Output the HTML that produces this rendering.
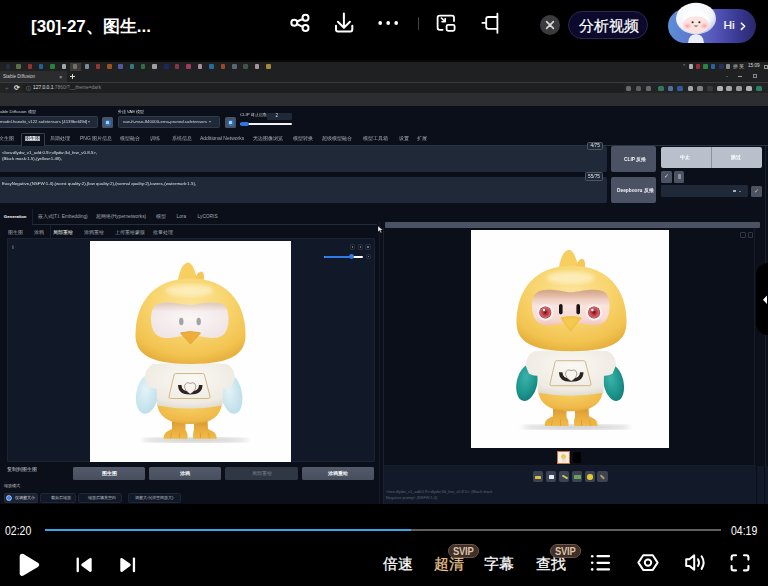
<!DOCTYPE html>
<html><head><meta charset="utf-8">
<style>
*{margin:0;padding:0;box-sizing:border-box}
html,body{width:768px;height:586px;overflow:hidden;background:#000}
body{position:relative;font-family:"Liberation Sans",sans-serif;color:#fff}
.a{position:absolute}
.t{position:absolute;white-space:nowrap;line-height:1}
</style></head><body>

<!-- ===== TOP BAR ===== -->
<div class="t" style="left:31px;top:17.6px;font-size:17px;font-weight:bold;color:#fff">[30]-27、图生...</div>
<svg class="a" style="left:0;top:0" width="768" height="50" viewBox="0 0 768 50" fill="none" stroke="#fff" stroke-width="2" stroke-linecap="round" stroke-linejoin="round">
  <!-- share -->
  <circle cx="305.5" cy="17.8" r="3"/><circle cx="294.3" cy="22.8" r="3"/><circle cx="305.5" cy="28" r="3"/>
  <line x1="297" y1="21.5" x2="302.8" y2="19"/><line x1="297" y1="24.2" x2="302.8" y2="26.8"/>
  <!-- download -->
  <path d="M343.9 13.6V27.6M337.9 21.8L343.9 27.8L349.9 21.8"/>
  <path d="M336 25.8V29.4Q336 31.4 338 31.4H350.3Q352.3 31.4 352.3 29.4V25.8"/>
  <!-- dots -->
  <circle cx="380.2" cy="23" r="1.9" fill="#fff" stroke="none"/><circle cx="388.2" cy="23" r="1.9" fill="#fff" stroke="none"/><circle cx="396.2" cy="23" r="1.9" fill="#fff" stroke="none"/>
  <line x1="418.5" y1="17.5" x2="418.5" y2="29.5" stroke="#444" stroke-width="1"/>
  <!-- pip -->
  <path d="M454 21V17.6Q454 15.6 452 15.6H439.6Q437.6 15.6 437.6 17.6V27.8Q437.6 29.8 439.6 29.8H442.6" stroke-width="1.8"/>
  <rect x="446.6" y="24.8" width="8" height="6" rx="1.5" stroke-width="1.8"/>
  <path d="M441.4 18L445 21.6M445.2 18.6V21.8H442" stroke-width="1.6"/>
  <!-- last -->
  <path d="M497.4 13.6V32.8M497.4 17H488.2Q486.2 17 486.2 19V26.8Q486.2 28.8 488.2 28.8H497.4M486 22.9H482.4" stroke-width="1.8"/>
</svg>
<!-- close x -->
<div class="a" style="left:540px;top:15px;width:20px;height:20px;border-radius:10px;background:#3b3b3f"></div>
<svg class="a" style="left:540px;top:15px" width="20" height="20" stroke="#d8d8d8" stroke-width="1.6" stroke-linecap="round"><path d="M6.6 6.6L13.4 13.4M13.4 6.6L6.6 13.4"/></svg>
<!-- analyse pill -->
<div class="a" style="left:568px;top:10.5px;width:80px;height:28px;border-radius:14px;background:#0b0a2c;border:1px solid #2a2852"></div>
<div class="t" style="left:579px;top:18px;font-size:15px;-webkit-text-stroke:0.2px #fff;color:#fff">分析视频</div>
<!-- hi pill -->
<div class="a" style="left:668px;top:9px;width:88px;height:34px;border-radius:17px;background:linear-gradient(90deg,#5d8fd8 0%,#5d74cc 30%,#5454b8 55%,#3a3a96 78%,#28286a 100%)"></div>
<svg class="a" style="left:668px;top:0" width="60" height="46">
  <defs><radialGradient id="hel" cx="0.42" cy="0.35" r="0.65"><stop offset="0" stop-color="#ffffff"/><stop offset="0.75" stop-color="#f1f4fa"/><stop offset="1" stop-color="#c4d0ea"/></radialGradient>
  <radialGradient id="cheek" cx="0.5" cy="0.5" r="0.5"><stop offset="0" stop-color="#ff95a5"/><stop offset="1" stop-color="#ffc9cf" stop-opacity="0"/></radialGradient></defs>
  <path d="M20 43Q20.5 34.5 28 34Q35.5 34.5 36 43Z" fill="#e9eef8"/>
  <ellipse cx="28" cy="18.5" rx="20" ry="15.8" fill="url(#hel)"/>
  <ellipse cx="28" cy="23.5" rx="13.5" ry="10" fill="#fde3e0"/>
  <path d="M14.5 23Q15 11 28 10.5Q41 11 41.5 23Q37 15.5 28 16.5Q19 15.5 14.5 23Z" fill="#fdfdff"/>
  <ellipse cx="19.5" cy="26" rx="5" ry="3.8" fill="url(#cheek)"/>
  <ellipse cx="36.5" cy="26" rx="5" ry="3.8" fill="url(#cheek)"/>
  <circle cx="24.6" cy="22.2" r="1.05" fill="#222"/><circle cx="31.4" cy="22.2" r="1.05" fill="#222"/>
  <path d="M26.3 25.6Q28 27 29.7 25.6" stroke="#333" stroke-width="0.8" fill="none"/>
</svg>
<div class="t" style="left:723.5px;top:19.8px;font-size:11.8px;-webkit-text-stroke:0.2px #fff;color:#fff">Hi</div>
<svg class="a" style="left:738px;top:20px" width="10" height="12" fill="none" stroke="#fff" stroke-width="1.6" stroke-linecap="round" stroke-linejoin="round"><path d="M3.4 3.2L6.6 6.3L3.4 9.4"/></svg>

<!-- ===== VIDEO FRAME ===== -->
<div class="a" id="vf" style="left:0;top:0;width:768px;height:504px;filter:blur(0.35px)">
<div class="a" style="left:0;top:60px;width:768px;height:444px;background:#0b0f19"></div>
<!-- browser chrome -->
<div class="a" style="left:0;top:60px;width:768px;height:2px;background:#0a0a0a"></div>
<div class="a" style="left:0;top:62px;width:768px;height:20px;background:#1f2021"></div>
<div class="a" style="left:0;top:70.5px;width:67px;height:11.5px;background:#2b2c2e"></div>
<div class="a" style="left:0;top:82px;width:768px;height:1px;background:#3a3b3c"></div>
<div class="a" style="left:0;top:83px;width:768px;height:10px;background:#222324"></div>
<div class="a" style="left:0;top:93px;width:768px;height:13px;background:#2c2d2f"></div>
<!-- chrome content -->
<div class="a" style="left:70px;top:62.5px;width:11px;height:8px;background:#3a3a3a"></div>
<div class="a" style="left:5.5px;top:64.2px;width:4.6px;height:4.4px;background:#2a3550;border-radius:1px;opacity:0.65"></div>
<div class="a" style="left:16.3px;top:64.2px;width:4.6px;height:4.4px;background:#7a9a5a;border-radius:1px;opacity:0.65"></div>
<div class="a" style="left:27.8px;top:64.2px;width:4.6px;height:4.4px;background:#d9353a;border-radius:1px;opacity:0.65"></div>
<div class="a" style="left:38.9px;top:64.2px;width:4.6px;height:4.4px;background:#2a7fd0;border-radius:1px;opacity:0.65"></div>
<div class="a" style="left:50.3px;top:64.2px;width:4.6px;height:4.4px;background:#2fb34a;border-radius:1px;opacity:0.65"></div>
<div class="a" style="left:61.6px;top:64.2px;width:4.6px;height:4.4px;background:#e8eef0;border-radius:1px;opacity:0.65"></div>
<div class="a" style="left:72.6px;top:64.2px;width:4.6px;height:4.4px;background:#9a8c70;border-radius:1px;opacity:0.65"></div>
<div class="a" style="left:84.6px;top:64.2px;width:4.6px;height:4.4px;background:#aac4e0;border-radius:1px;opacity:0.65"></div>
<div class="a" style="left:95.9px;top:64.2px;width:4.6px;height:4.4px;background:#d04040;border-radius:1px;opacity:0.65"></div>
<div class="a" style="left:107.2px;top:64.2px;width:4.6px;height:4.4px;background:#e06a28;border-radius:1px;opacity:0.65"></div>
<div class="a" style="left:118.4px;top:64.2px;width:4.6px;height:4.4px;background:#6a78e0;border-radius:1px;opacity:0.65"></div>
<div class="a" style="left:129.6px;top:64.2px;width:4.6px;height:4.4px;background:#40a8b0;border-radius:1px;opacity:0.65"></div>
<div class="a" style="left:140.6px;top:64.2px;width:4.6px;height:4.4px;background:#3a9a5a;border-radius:1px;opacity:0.65"></div>
<div class="a" style="left:152.3px;top:64.2px;width:4.6px;height:4.4px;background:#e0e4ea;border-radius:1px;opacity:0.65"></div>
<div class="a" style="left:164.0px;top:64.2px;width:4.6px;height:4.4px;background:#1a2a8a;border-radius:1px;opacity:0.65"></div>
<div class="a" style="left:174.9px;top:64.2px;width:4.6px;height:4.4px;background:#c03a6a;border-radius:1px;opacity:0.65"></div>
<div class="a" style="left:186.1px;top:64.2px;width:4.6px;height:4.4px;background:#e04a7a;border-radius:1px;opacity:0.65"></div>
<div class="a" style="left:197.6px;top:64.2px;width:4.6px;height:4.4px;background:#f0c8d8;border-radius:1px;opacity:0.65"></div>
<div class="a" style="left:209.1px;top:64.2px;width:4.6px;height:4.4px;background:#2a90e0;border-radius:1px;opacity:0.65"></div>
<div class="a" style="left:220.6px;top:64.2px;width:4.6px;height:4.4px;background:#e05a30;border-radius:1px;opacity:0.65"></div>
<div class="a" style="left:232.2px;top:64.2px;width:4.6px;height:4.4px;background:#7a8aa0;border-radius:1px;opacity:0.65"></div>
<div class="a" style="left:243.4px;top:64.2px;width:4.6px;height:4.4px;background:#5a6a5a;border-radius:1px;opacity:0.65"></div>
<div class="a" style="left:254.6px;top:64.2px;width:4.6px;height:4.4px;background:#f0d0e0;border-radius:1px;opacity:0.65"></div>
<div class="a" style="left:266.1px;top:64.2px;width:4.6px;height:4.4px;background:#e8c050;border-radius:1px;opacity:0.65"></div>
<div class="a" style="left:688.8px;top:64.3px;width:4.4px;height:4.8px;background:#e8e8e8;border-radius:1px;opacity:0.7"></div>
<div class="a" style="left:695.8px;top:64.3px;width:4.4px;height:4.8px;background:#d03040;border-radius:1px;opacity:0.7"></div>
<div class="a" style="left:703.3px;top:64.3px;width:4.4px;height:4.8px;background:#30b050;border-radius:1px;opacity:0.7"></div>
<div class="a" style="left:710.8px;top:64.3px;width:4.4px;height:4.8px;background:#2a80e0;border-radius:1px;opacity:0.7"></div>
<div class="a" style="left:719.3px;top:64.3px;width:4.4px;height:4.8px;background:#2a3a70;border-radius:1px;opacity:0.7"></div>
<div class="a" style="left:725.6px;top:64.3px;width:4.4px;height:4.8px;background:#bbb;border-radius:1px;opacity:0.7"></div>
<div class="t" style="left:682px;top:64px;font-size:5px;color:#aaa">⌃</div>
<div class="t" style="left:732.5px;top:64px;font-size:5px;color:#ccc">拼 英</div>
<div class="t" style="left:748px;top:64.3px;font-size:4.6px;color:#ddd">15:09</div>
<div class="a" style="left:763.5px;top:64.5px;width:4.5px;height:4.5px;border:0.6px solid #999"></div>
<div class="t" style="left:725px;top:73px;font-size:5px;color:#999">⌄</div>
<div class="a" style="left:738px;top:75.5px;width:4px;height:0.6px;background:#999"></div>
<div class="a" style="left:753px;top:73.5px;width:4px;height:4px;border:0.6px solid #888"></div>
<div class="t" style="left:3px;top:74.8px;font-size:4.6px;color:#d0d0d0">Stable Diffusion</div>
<div class="t" style="left:59px;top:73.8px;font-size:6px;color:#bbb">×</div>
<div class="a" style="left:70.3px;top:76px;width:5px;height:1px;background:#ddd"></div><div class="a" style="left:72.3px;top:74px;width:1px;height:5px;background:#ddd"></div>
<div class="a" style="left:23px;top:83px;width:602px;height:10px;background:#1e1f21;border-radius:4px"></div>
<div class="t" style="left:5px;top:85px;font-size:6px;color:#666">+</div>
<div class="t" style="left:14px;top:85px;font-size:6.5px;font-weight:bold;color:#e0e0e0">⟳</div>
<div class="t" style="left:25.5px;top:85.5px;font-size:5px;color:#999">ⓘ</div>
<div class="t" style="left:33px;top:85.8px;font-size:4.9px;color:#e0e0e0">127.0.0.1<span style="color:#858585">:7860/?__theme=dark</span></div>
<div class="a" style="left:625.8px;top:85.7px;width:5.2px;height:5.2px;background:#888;border-radius:1.5px;opacity:0.7"></div>
<div class="a" style="left:636.2px;top:85.7px;width:5.2px;height:5.2px;background:#777;border-radius:1.5px;opacity:0.7"></div>
<div class="a" style="left:646.0px;top:85.7px;width:5.2px;height:5.2px;background:#888;border-radius:1.5px;opacity:0.7"></div>
<div class="a" style="left:658.4px;top:85.7px;width:5.2px;height:5.2px;background:#3a9a7a;border-radius:1.5px;opacity:0.7"></div>
<div class="a" style="left:667.9px;top:85.7px;width:5.2px;height:5.2px;background:#6a90d0;border-radius:1.5px;opacity:0.7"></div>
<div class="a" style="left:677.4px;top:85.7px;width:5.2px;height:5.2px;background:#3a70d0;border-radius:1.5px;opacity:0.7"></div>
<div class="a" style="left:687.7px;top:85.7px;width:5.2px;height:5.2px;background:#ddd;border-radius:1.5px;opacity:0.7"></div>
<div class="a" style="left:697.4px;top:85.7px;width:5.2px;height:5.2px;background:#aaa;border-radius:1.5px;opacity:0.7"></div>
<div class="a" style="left:707.4px;top:85.7px;width:5.2px;height:5.2px;background:#444;border-radius:1.5px;opacity:0.7"></div>
<div class="a" style="left:717.4px;top:85.7px;width:5.2px;height:5.2px;background:#eee;border-radius:1.5px;opacity:0.7"></div>
<div class="a" style="left:726.4px;top:85.7px;width:5.2px;height:5.2px;background:#ddd;border-radius:1.5px;opacity:0.7"></div>
<div class="a" style="left:736.4px;top:85.7px;width:5.2px;height:5.2px;background:#ccc;border-radius:1.5px;opacity:0.7"></div>
<div class="a" style="left:746.4px;top:85.7px;width:5.2px;height:5.2px;background:#eee;border-radius:1.5px;opacity:0.7"></div>
<div class="a" style="left:756.4px;top:85.7px;width:5.2px;height:5.2px;background:#30a888;border-radius:1.5px;opacity:0.7"></div>
<!-- page header -->
<div class="t" style="left:0;top:110px;font-size:4.4px;color:#d0d4da">able Diffusion 模型</div>
<div class="a" style="left:-4px;top:116px;width:102px;height:11.5px;background:#1f2937;border:0.5px solid #2f3a4a;border-radius:1.5px"></div>
<div class="t" style="left:0;top:119.8px;font-size:4.3px;color:#d8dce2">model.hanobi_v122.safetensors [4139bef49d]</div>
<div class="t" style="left:88px;top:120px;font-size:4px;color:#999">▾</div>
<div class="a" style="left:102px;top:117px;width:11px;height:11px;background:#485366;border-radius:1.5px"></div>
<div class="a" style="left:104.5px;top:119.5px;width:6px;height:6px;background:#2f6fc4;border-radius:2px"></div>
<div class="a" style="left:106px;top:121px;width:3px;height:3px;background:#9ad8f6;border-radius:0.5px"></div>
<div class="t" style="left:117.5px;top:110px;font-size:4.4px;color:#d0d4da">外挂 VAE 模型</div>
<div class="a" style="left:117.5px;top:116px;width:102.5px;height:11.5px;background:#1f2937;border:0.5px solid #2f3a4a;border-radius:1.5px"></div>
<div class="t" style="left:123px;top:119.8px;font-size:4.3px;color:#d8dce2">vae-ft-mse-840000-ema-pruned.safetensors</div>
<div class="t" style="left:209px;top:120px;font-size:4px;color:#999">▾</div>
<div class="a" style="left:225px;top:117px;width:11px;height:11px;background:#485366;border-radius:1.5px"></div>
<div class="a" style="left:227.5px;top:119.5px;width:6px;height:6px;background:#2f6fc4;border-radius:2px"></div>
<div class="a" style="left:229px;top:121px;width:3px;height:3px;background:#9ad8f6;border-radius:0.5px"></div>
<div class="t" style="left:240px;top:113px;font-size:4.4px;color:#d0d4da">CLIP 终止层数</div>
<div class="a" style="left:267px;top:113px;width:25px;height:6.8px;background:#1f2937;border-radius:1px"></div>
<div class="t" style="left:275.5px;top:114px;font-size:4.6px;color:#ddd">2</div>
<div class="a" style="left:240px;top:123px;width:52px;height:2.4px;background:#f0f2f5;border-radius:1.2px"></div>
<div class="a" style="left:240px;top:122px;width:9px;height:4.4px;background:#2f74e0;border-radius:2.2px"></div>

<!-- main tabs -->
<div class="a" style="left:0;top:145px;width:768px;height:0.8px;background:#2a3342"></div>
<div class="a" style="left:20.6px;top:133.2px;width:24px;height:12.6px;background:#0b0f19;border:0.7px solid #353e4e;border-bottom:none;border-radius:1.5px 1.5px 0 0"></div>
<div class="t" style="left:0;top:136.3px;font-size:5px;color:#a9aeb7;word-spacing:0">
<span class="t" style="left:-1px">文生图</span><span class="t" style="left:25px;color:#1b1f28;background:#dfe2e8;top:0.1px">图生图</span><span class="t" style="left:50px">后期处理</span><span class="t" style="left:80px">PNG 图片信息</span><span class="t" style="left:120px">模型融合</span><span class="t" style="left:150px">训练</span><span class="t" style="left:172px">系统信息</span><span class="t" style="left:200px">Additional Networks</span><span class="t" style="left:253px">无边图像浏览</span><span class="t" style="left:293px">模型转换</span><span class="t" style="left:322px">超级模型融合</span><span class="t" style="left:363px">模型工具箱</span><span class="t" style="left:399px">设置</span><span class="t" style="left:417px">扩展</span>
</div>

<!-- prompts -->
<div class="a" style="left:-3px;top:146px;width:610px;height:26px;background:#1f2937;border-radius:2px"></div>
<div class="a" style="left:-3px;top:176.5px;width:610px;height:26.5px;background:#1f2937;border-radius:2px"></div>
<div class="t" style="left:2px;top:149.8px;font-size:4.4px;line-height:6.2px;color:#dfe2e7">&lt;lora:dlydw_v1_add:0.9&gt;;dlydw;3d_few_v0.8.5&gt;,<br>(Black mask:1.5),(yellow:1.48),</div>
<div class="t" style="left:2px;top:182px;font-size:4.4px;color:#dfe2e7">EasyNegative,(NSFW:1.4),(worst quality:2),(low quality:2),(normal quality:2),lowres,(watermark:1.5),</div>
<div class="a" style="left:586.5px;top:142px;width:16.5px;height:8px;background:#1f2937;border:0.7px solid #4b5563;border-radius:1.5px"></div>
<div class="t" style="left:590.5px;top:144px;font-size:4.8px;color:#e5e7eb">4/75</div>
<div class="a" style="left:585px;top:172px;width:18px;height:9px;background:#1f2937;border:0.7px solid #4b5563;border-radius:1.5px"></div>
<div class="t" style="left:588px;top:174.5px;font-size:4.8px;color:#e5e7eb">55/75</div>

<!-- right buttons -->
<div class="a" style="left:611px;top:146px;width:45px;height:26px;background:#4b5263;border-radius:2px"></div>
<div class="t" style="left:624px;top:157.5px;font-size:4.8px;color:#f3f4f6;font-weight:bold">CLIP 反推</div>
<div class="a" style="left:611px;top:177px;width:45px;height:26px;background:#4b5263;border-radius:2px"></div>
<div class="t" style="left:617px;top:189px;font-size:4.8px;color:#f3f4f6;font-weight:bold">Deepbooru 反推</div>
<div class="a" style="left:661px;top:146.5px;width:101px;height:21.5px;background:#b9c0cb;border-radius:2px"></div>
<div class="a" style="left:711px;top:146.5px;width:0.8px;height:21.5px;background:#8c939e"></div>
<div class="t" style="left:680px;top:155px;font-size:5px;font-weight:bold;color:#fff">中止</div>
<div class="t" style="left:731px;top:155px;font-size:5px;font-weight:bold;color:#fff">跳过</div>
<div class="a" style="left:661px;top:171px;width:10.5px;height:11.5px;background:#4b5263;border-radius:1.5px"></div>
<div class="t" style="left:663.5px;top:174px;font-size:5.5px;color:#ddd">✓</div>
<div class="a" style="left:674px;top:171px;width:10px;height:11.5px;background:#4b5263;border-radius:1.5px"></div>
<div class="a" style="left:677.5px;top:174px;width:3px;height:5px;background:#8a909c;border-radius:0.5px"></div>
<div class="a" style="left:661px;top:185px;width:87px;height:12px;background:#1f2937;border-radius:1.5px"></div>
<div class="a" style="left:733px;top:190px;width:3px;height:2px;background:#aab"></div>
<div class="a" style="left:739px;top:190.5px;width:2px;height:1.5px;background:#778"></div>
<div class="a" style="left:751px;top:186px;width:11px;height:11px;background:#4b5263;border-radius:1.5px"></div>
<div class="t" style="left:754px;top:188.5px;font-size:5.5px;color:#d4c06a">✓</div>
<div class="a" style="left:765px;top:146px;width:0.8px;height:358px;background:#1b2130"></div>

<!-- generation tabs -->
<div class="a" style="left:32px;top:223.8px;width:345px;height:0.8px;background:#252c3a"></div>
<div class="a" style="left:31.5px;top:209px;width:0.7px;height:15px;background:#1a202c"></div>
<div class="a" style="left:50px;top:226px;width:0.7px;height:14px;background:#1d2330"></div>
<div class="t" style="left:0;top:215px;font-size:4.8px;color:#a0a6b0">
<span class="t" style="left:3.8px;color:#fff;font-weight:bold;font-size:4.3px;top:-0.2px">Generation</span><span class="t" style="left:37.5px">嵌入式(T.I. Embedding)</span><span class="t" style="left:96px">超网络(Hypernetworks)</span><span class="t" style="left:156px">模型</span><span class="t" style="left:176.5px">Lora</span><span class="t" style="left:197.5px">LyCORIS</span>
</div>
<div class="t" style="left:0;top:230.3px;font-size:5px;color:#a0a6b0">
<span class="t" style="left:7.8px">图生图</span><span class="t" style="left:33.7px">涂鸦</span><span class="t" style="left:53px;color:#fff">局部重绘</span><span class="t" style="left:83.7px">涂鸦重绘</span><span class="t" style="left:115px">上传重绘蒙版</span><span class="t" style="left:153px">批量处理</span>
</div>

<!-- left panel -->
<div class="a" style="left:7px;top:238px;width:367.5px;height:224px;background:#111827;border:0.6px solid #1c2332;border-radius:1px"></div>
<div class="a" style="left:90px;top:241px;width:201px;height:220.5px;background:#fefefe"></div>
<div class="t" style="left:12.3px;top:244.8px;font-size:5.5px;color:#d8d8d8">i</div>
<div class="a" style="left:349.5px;top:244px;width:5.5px;height:5.5px;border:0.5px solid #262d3b;border-radius:1px"></div><div class="a" style="left:351.5px;top:246px;width:1.5px;height:1.5px;background:#6b7280"></div>
<div class="a" style="left:357.5px;top:244px;width:5.5px;height:5.5px;border:0.5px solid #262d3b;border-radius:1px"></div><div class="a" style="left:359.5px;top:246px;width:1.5px;height:1.5px;background:#6b7280"></div>
<div class="a" style="left:365px;top:244px;width:5.5px;height:5.5px;border:0.5px solid #262d3b;border-radius:1px"></div><div class="a" style="left:367.0px;top:246px;width:1.5px;height:1.5px;background:#6b7280"></div>
<div class="a" style="left:324px;top:255.5px;width:39px;height:2.4px;background:#fff;border-radius:1.2px"></div>
<div class="a" style="left:324px;top:255.5px;width:28px;height:2.4px;background:#2f7be8;border-radius:1.2px"></div>
<div class="a" style="left:348.5px;top:254.3px;width:5px;height:4.8px;background:#2f7be8;border-radius:50%"></div>
<div class="a" style="left:365.5px;top:253.5px;width:5.5px;height:5.5px;border:0.5px solid #262d3b;border-radius:1px"></div><div class="a" style="left:367.5px;top:255.5px;width:1.5px;height:1.5px;background:#6b7280"></div>

<!-- left buttons -->
<div class="t" style="left:6.5px;top:467.5px;font-size:4.6px;color:#c9ced6">复制到图生图</div>
<div class="a" style="left:73px;top:467px;width:71.5px;height:13px;background:linear-gradient(#535b6b,#474e5d);border-radius:1.5px"></div>
<div class="t" style="left:101.5px;top:471.3px;font-size:5px;font-weight:bold;color:#f3f4f6">图生图</div>
<div class="a" style="left:149px;top:467px;width:71.7px;height:13px;background:linear-gradient(#535b6b,#474e5d);border-radius:1.5px"></div>
<div class="t" style="left:180px;top:471.3px;font-size:5px;font-weight:bold;color:#f3f4f6">涂鸦</div>
<div class="a" style="left:225.3px;top:467px;width:72.7px;height:13px;background:#2f3644;border-radius:1.5px"></div>
<div class="t" style="left:251.5px;top:471.3px;font-size:5px;color:#7d838d">局部重绘</div>
<div class="a" style="left:302px;top:467px;width:71.7px;height:13px;background:linear-gradient(#535b6b,#474e5d);border-radius:1.5px"></div>
<div class="t" style="left:328px;top:471.3px;font-size:5px;font-weight:bold;color:#f3f4f6">涂鸦重绘</div>
<div class="t" style="left:4px;top:484.3px;font-size:4.4px;color:#c9ced6">缩放模式</div>
<div class="a" style="left:4px;top:492.7px;width:34px;height:10.3px;background:#1b2231;border:0.5px solid #252d3c;border-radius:1.5px"></div>
<div class="a" style="left:7px;top:496px;width:3.6px;height:3.6px;background:#3b82f6;border-radius:50%;box-shadow:0 0 0 0.7px #c8d8f4"></div>
<div class="t" style="left:14.5px;top:496.3px;font-size:4.2px;color:#e5e7eb">仅调整大小</div>
<div class="a" style="left:40px;top:492.7px;width:35.5px;height:10.3px;background:#111827;border:0.5px solid #1f2735;border-radius:1.5px"></div>
<div class="t" style="left:51px;top:496.3px;font-size:4.2px;color:#c5cad2">裁剪后缩放</div>
<div class="a" style="left:78px;top:492.7px;width:44.4px;height:10.3px;background:#111827;border:0.5px solid #1f2735;border-radius:1.5px"></div>
<div class="t" style="left:87.5px;top:496.3px;font-size:4.2px;color:#c5cad2">缩放后填充空白</div>
<div class="a" style="left:127.6px;top:492.7px;width:53.4px;height:10.3px;background:#111827;border:0.5px solid #1f2735;border-radius:1.5px"></div>
<div class="t" style="left:134.5px;top:496.3px;font-size:4.2px;color:#c5cad2">调整大小(潜空间放大)</div>

<!-- divider lines + cursor -->
<div class="a" style="left:379px;top:222px;width:0.8px;height:282px;background:#161c28"></div>
<div class="a" style="left:383px;top:228px;width:0.8px;height:276px;background:#1a2030"></div>
<svg class="a" style="left:377px;top:224.5px" width="8" height="9"><path d="M1 1L1 6.8L2.6 5.5L3.8 7.8L4.7 7.4L3.6 5.1L5.6 5Z" fill="#eee" stroke="#111" stroke-width="0.3"/></svg>

<!-- right panel -->
<div class="a" style="left:385px;top:221.7px;width:375px;height:6.3px;background:#4b5263;border-radius:1px"></div>
<div class="a" style="left:471px;top:229.5px;width:198px;height:218.5px;background:#fefefe"></div>
<div class="a" style="left:740px;top:232px;width:5.5px;height:5.5px;border:0.6px solid #2f3747;border-radius:1px"></div>
<div class="a" style="left:747.5px;top:232px;width:5.5px;height:5.5px;border:0.6px solid #2f3747;border-radius:1px"></div>
<div class="a" style="left:557px;top:451px;width:13px;height:13px;background:#f6efe6;border:1.1px solid #d4703a"></div>
<div class="a" style="left:561px;top:454px;width:5px;height:5px;background:#efc860;border-radius:50%"></div>
<div class="a" style="left:561.5px;top:458.5px;width:4px;height:3px;background:#e6e0d6"></div>
<div class="a" style="left:573px;top:452px;width:7.7px;height:11px;background:#000"></div>
<div class="a" style="left:384px;top:465.5px;width:384px;height:38.5px;background:#121a29"></div>
<div class="a" style="left:756px;top:465.5px;width:0.8px;height:38.5px;background:#0b0f19"></div>
<div class="a" style="left:763.5px;top:465.5px;width:0.8px;height:38.5px;background:#0b0f19"></div>
<div class="a" style="left:754px;top:228px;width:0.7px;height:237px;background:#151b28"></div>
<div class="a" style="left:384px;top:464.8px;width:371px;height:0.7px;background:#161c29"></div>
<div class="t" style="left:386px;top:488px;font-size:3.9px;line-height:7.5px;color:#5d6573">&lt;lora:dlydw_v1_add:0.9&gt;;dlydw;3d_few_v0.8.5&gt;, (Black mask</div><div class="t" style="left:386px;top:495.5px;font-size:3.9px;color:#5d6573">Negative prompt: (NSFW:1.4)</div>
<div class="a" style="left:532.6px;top:471.4px;width:10.6px;height:11px;background:#3c4454;border-radius:2px"></div>
<div class="a" style="left:535px;top:475.5px;width:6px;height:3.5px;background:#d8c040;border-radius:0.5px"></div>
<div class="a" style="left:545.5px;top:471.4px;width:10.6px;height:11px;background:#3c4454;border-radius:2px"></div>
<div class="a" style="left:548.5px;top:474.5px;width:5px;height:4.5px;background:#e8ecf4;border-radius:0.5px"></div>
<div class="a" style="left:559px;top:471.4px;width:10.4px;height:11px;background:#3c4454;border-radius:2px"></div>
<div class="a" style="left:561.5px;top:476px;width:6px;height:2px;background:#c8d060;transform:rotate(30deg)"></div>
<div class="a" style="left:571.9px;top:471.4px;width:10.4px;height:11px;background:#3c4454;border-radius:2px"></div>
<div class="a" style="left:574px;top:474.5px;width:6.5px;height:4.5px;background:#6aa060;border-radius:0.5px"></div>
<div class="a" style="left:584.6px;top:471.4px;width:10.4px;height:11px;background:#3c4454;border-radius:2px"></div>
<div class="a" style="left:587px;top:474px;width:5.5px;height:5.5px;background:#e8c830;border-radius:50%"></div>
<div class="a" style="left:597.4px;top:471.4px;width:10.6px;height:11px;background:#3c4454;border-radius:2px"></div>
<div class="a" style="left:600px;top:476px;width:5px;height:1.5px;background:#b0a060;transform:rotate(45deg)"></div>


<!-- side handle -->
<div class="a" style="left:756px;top:263px;width:24px;height:72px;background:#000;border-radius:12px 0 0 12px"></div>
<svg class="a" style="left:760px;top:294px" width="8" height="12"><path d="M7 1.5L3 5.8L7 10.1Z" fill="#fff"/></svg>

<!-- characters -->
<svg class="a" style="left:0;top:0" width="768" height="504" viewBox="0 0 768 504">
<defs>
  <radialGradient id="yhead" cx="0.5" cy="0.3" r="0.75">
    <stop offset="0" stop-color="#fbe39a"/><stop offset="0.45" stop-color="#f8d56f"/><stop offset="0.8" stop-color="#f2c350"/><stop offset="1" stop-color="#e2ab38"/>
  </radialGradient>
  <radialGradient id="ybody" cx="0.5" cy="0.3" r="0.8">
    <stop offset="0" stop-color="#f6cf62"/><stop offset="0.7" stop-color="#efb948"/><stop offset="1" stop-color="#d99d34"/>
  </radialGradient>
  <linearGradient id="yfoot" x1="0" y1="0" x2="0" y2="1">
    <stop offset="0" stop-color="#d3932f"/><stop offset="0.45" stop-color="#e7aa3c"/><stop offset="1" stop-color="#f0bb4a"/>
  </linearGradient>
  <radialGradient id="shirt" cx="0.5" cy="0.35" r="0.75">
    <stop offset="0" stop-color="#faf8f3"/><stop offset="0.7" stop-color="#efebe3"/><stop offset="1" stop-color="#d9d3c8"/>
  </radialGradient>
  <radialGradient id="armL" cx="0.4" cy="0.4" r="0.7">
    <stop offset="0" stop-color="#e4f3f8"/><stop offset="1" stop-color="#b9dce8"/>
  </radialGradient>
  <radialGradient id="armR" cx="0.4" cy="0.35" r="0.75">
    <stop offset="0" stop-color="#3bb3a9"/><stop offset="0.6" stop-color="#1d968f"/><stop offset="1" stop-color="#137770"/>
  </radialGradient>
  <radialGradient id="faceL" cx="0.5" cy="0.45" r="0.65">
    <stop offset="0" stop-color="#fbf7f7"/><stop offset="1" stop-color="#efe3e4"/>
  </radialGradient>
  <linearGradient id="faceR" x1="0" y1="0" x2="0" y2="1">
    <stop offset="0" stop-color="#d9a890"/><stop offset="0.22" stop-color="#ecc6b6"/><stop offset="0.45" stop-color="#f8e4de"/><stop offset="0.8" stop-color="#f7dcd6"/><stop offset="1" stop-color="#efc4bc"/>
  </linearGradient>
  <radialGradient id="iris" cx="0.5" cy="0.5" r="0.5">
    <stop offset="0" stop-color="#5a1418"/><stop offset="0.35" stop-color="#b5333a"/><stop offset="0.85" stop-color="#d9646a"/><stop offset="1" stop-color="#6b2a2c"/>
  </radialGradient>
  <linearGradient id="brow" x1="0" y1="0" x2="0" y2="1"><stop offset="0" stop-color="#c9a27a" stop-opacity="0.45"/><stop offset="0.25" stop-color="#c9a27a" stop-opacity="0"/><stop offset="1" stop-color="#c9a27a" stop-opacity="0"/></linearGradient>
  <filter id="blur2"><feGaussianBlur stdDeviation="2"/></filter>
  <filter id="blur05"><feGaussianBlur stdDeviation="0.5"/></filter>
  <g id="chick">
    <ellipse cx="195" cy="440" rx="54" ry="2.2" fill="#c4c4c4" filter="url(#blur2)"/>
    <!-- feet -->
    <path d="M172 419L185.5 419L185.5 430Q188 433 187.5 438.8L163.6 438.8Q163.5 433 168 431L172 429Z" fill="url(#yfoot)"/>
    <path d="M194 419L207.5 419L208 429L212 431Q216.7 433 216.7 438.8L193.3 438.8Q192.5 433 194 430Z" fill="url(#yfoot)"/>
    <path d="M171.5 433L170.5 438.5M179.5 432.5L179.5 438.5M200.5 432.5L200.5 438.5M208.5 433L209.5 438.5" stroke="#c98a26" stroke-width="0.8" opacity="0.6"/>
    <!-- lower body -->
    <path d="M157 400L222 400Q222.5 424 190 424Q156.5 424 157 400Z" fill="url(#ybody)"/>
  </g>
  <g id="chickTop">
    <!-- shirt -->
    <path d="M153 364Q190 361 227 364Q234.5 368 235 378L231.5 386.5Q226.5 389 223 388.5L222.5 405.5Q190 411.5 157 405.5L156.5 388.5Q153 389 148 386.5L144.5 378Q145.5 368 153 364Z" fill="url(#shirt)"/>
    <path d="M175.5 373.5L202.5 373.5Q204 373.5 204.5 375L210 396.5Q210.5 398.5 208.5 398.5L170.5 398.5Q168.5 398.5 169 396.5L174 375Q174.5 373.5 175.5 373.5Z" fill="none" stroke="#cdb07a" stroke-width="0.9"/>
    <path d="M178 385Q178 394.5 190 394.5Q202.5 394.5 202.5 385L199 385Q199 391.5 190 391.5Q181.5 391.5 181.5 385Z" fill="#2a2320"/>
    <path d="M190.2 394Q184.3 390.5 184.6 385.8Q185.6 381.5 190.2 383.4Q194.8 381.5 195.8 385.8Q196.1 390.5 190.2 394Z" fill="#f8f5f0" stroke="#5a4a40" stroke-width="0.5"/>
    <!-- comb -->
    <path d="M177.5 284C178.5 273 182 263.5 187.8 262.5C192.5 262.5 195 270 198.5 284Z" fill="#f6cf60"/>
    <path d="M194.5 283C195 277 197.5 272 201 271.5C204 272 204.5 276 203.5 283Z" fill="#f3c655"/>
    <!-- head -->
    <path d="M135.5 335C135.5 301 155 278.5 190.5 278.5C226 278.5 245.5 301 245.5 335C245.5 353 233 364 190.5 364C148 364 135.5 353 135.5 335Z" fill="url(#yhead)"/>
    <ellipse cx="189.5" cy="290.5" rx="24" ry="6" fill="#fdf1c4" opacity="0.8" filter="url(#blur2)"/>
  </g>
</defs>
<!-- LEFT CHICK -->
<clipPath id="clipL"><rect x="90" y="241" width="201" height="220.5"/></clipPath>
<g clip-path="url(#clipL)">
  <use href="#chick"/>
  <ellipse cx="147.3" cy="394" rx="11" ry="20" fill="url(#armL)" transform="rotate(10 147.3 394)"/>
  <ellipse cx="231.5" cy="394" rx="10.5" ry="20" fill="url(#armL)" transform="rotate(-10 231.5 394)"/>
  <use href="#chickTop"/>
  <path d="M151 319C151 307 155.5 302.5 167 302.5C178 302.5 184 305 190 305C196 305 202 302.5 213 302.5C224.5 302.5 228.5 307 228.5 319C228.5 331 224 338 213 338C205 338 200 335.5 190 335.5C180 335.5 175 338 167 338C156 338 151 331 151 319Z" fill="url(#faceL)"/>
  <path d="M151 319C151 307 155.5 302.5 167 302.5C178 302.5 184 305 190 305C196 305 202 302.5 213 302.5C224.5 302.5 228.5 307 228.5 319C228.5 331 224 338 213 338C205 338 200 335.5 190 335.5C180 335.5 175 338 167 338C156 338 151 331 151 319Z" fill="url(#brow)"/>
  <ellipse cx="181.3" cy="321.5" rx="2.2" ry="3.8" fill="#a3a3a6"/>
  <ellipse cx="198.7" cy="321.5" rx="2.2" ry="3.8" fill="#a3a3a6"/>
  <path d="M180.5 333Q190 330 200.5 333L190.5 344Z" fill="#eeae3c" stroke="#e6a534" stroke-width="1" stroke-linejoin="round"/>
</g>
<!-- RIGHT CHICK -->
<clipPath id="clipR"><rect x="471" y="229.5" width="198" height="218.5"/></clipPath>
<g clip-path="url(#clipR)">
<g transform="translate(381 -12.8)">
  <use href="#chick"/>
  <ellipse cx="146" cy="395.5" rx="10.3" ry="18.5" fill="url(#armR)" transform="rotate(12 146 395.5)"/>
  <ellipse cx="232.5" cy="395.5" rx="10" ry="18.5" fill="url(#armR)" transform="rotate(-12 232.5 395.5)"/>
  <use href="#chickTop"/>
  <path d="M151 319C151 307 155.5 302.5 167 302.5C178 302.5 184 305 190 305C196 305 202 302.5 213 302.5C224.5 302.5 228.5 307 228.5 319C228.5 331 224 338 213 338C205 338 200 335.5 190 335.5C180 335.5 175 338 167 338C156 338 151 331 151 319Z" fill="url(#faceR)"/>
  <path d="M151 319C151 307 155.5 302.5 167 302.5C178 302.5 184 305 190 305C196 305 202 302.5 213 302.5C224.5 302.5 228.5 307 228.5 319C228.5 331 224 338 213 338C205 338 200 335.5 190 335.5C180 335.5 175 338 167 338C156 338 151 331 151 319Z" fill="url(#brow)"/>
  <circle cx="164.3" cy="325.3" r="8" fill="#faf2f2"/>
  <circle cx="213.1" cy="325.3" r="8" fill="#faf2f2"/>
  <circle cx="164.3" cy="325.3" r="6" fill="url(#iris)"/>
  <circle cx="213.1" cy="325.3" r="6" fill="url(#iris)"/>
  <circle cx="163" cy="322.8" r="1.2" fill="#fff"/><circle cx="211.4" cy="322.8" r="1.2" fill="#fff"/>
  <rect x="178" y="316.8" width="3.6" height="10.4" rx="1.8" fill="#1a1414"/>
  <rect x="195.4" y="316.8" width="3.6" height="10.4" rx="1.8" fill="#1a1414"/>
  <path d="M180.5 331Q190 328.5 199.5 331L189.5 343.5Z" fill="#f5c850" stroke="#f2c24a" stroke-width="2" stroke-linejoin="round"/>
</g>
</g>
</svg>



</div>
<!-- ===== BOTTOM CONTROLS ===== -->
<div class="t" style="left:5px;top:524.5px;font-size:12.2px;color:#fff;transform:scaleX(0.86);transform-origin:0 0">02:20</div>
<div class="a" style="left:45px;top:529px;width:676px;height:2px;background:#5f5f5f"></div>
<div class="a" style="left:45px;top:529px;width:366px;height:2px;background:#3aa6ea"></div>
<div class="t" style="left:731px;top:524.5px;font-size:12.2px;color:#fff;transform:scaleX(0.86);transform-origin:0 0">04:19</div>
<svg class="a" style="left:0;top:540px" width="768" height="46" viewBox="0 540 768 46" fill="#fff" stroke="#fff" stroke-linejoin="round" stroke-linecap="round">
  <path d="M22.2 556.2L36.6 564.8L22.2 573.4Z" stroke-width="5"/>
  <rect x="76.6" y="557.6" width="2.3" height="14.6" stroke="none" rx="1"/>
  <path d="M90.4 559.2L82.6 564.9L90.4 570.6Z" stroke-width="2.6"/>
  <rect x="132.8" y="557.6" width="2.3" height="14.6" stroke="none" rx="1"/>
  <path d="M121.6 559.2L129.4 564.9L121.6 570.6Z" stroke-width="2.6"/>
  <!-- list -->
  <g stroke-width="2.2" fill="none"><path d="M597.5 556.2H609M597.5 562.8H609M597.5 569.4H609"/></g>
  <circle cx="592.2" cy="556.2" r="1.3" stroke="none"/><circle cx="592.2" cy="562.8" r="1.3" stroke="none"/><circle cx="592.2" cy="569.4" r="1.3" stroke="none"/>
  <!-- settings hex -->
  <g fill="none" stroke-width="2"><path d="M643.2 555.3H652.8L657.6 562.6L652.8 569.9H643.2L638.4 562.6Z"/><circle cx="648" cy="562.6" r="3.2"/></g>
  <!-- speaker -->
  <g fill="none" stroke-width="2"><path d="M686.2 559.3H689.4L694.2 555.4V569.8L689.4 565.9H686.2Z"/><path d="M698 559.2Q700 562.6 698 566"/><path d="M701.6 556.3Q705.6 562.6 701.6 568.9"/></g>
  <!-- fullscreen -->
  <g fill="none" stroke-width="2.1"><path d="M731.6 559.6V557.2Q731.6 555.2 733.6 555.2H736M744 555.2H746.4Q748.4 555.2 748.4 557.2V559.6M748.4 566V568.4Q748.4 570.4 746.4 570.4H744M736 570.4H733.6Q731.6 570.4 731.6 568.4V566"/></g>
</svg>
<div class="t" style="left:383px;top:556.5px;font-size:14.5px;-webkit-text-stroke:0.25px currentColor;color:#fff">倍速</div>
<div class="t" style="left:434px;top:556.5px;font-size:14.5px;-webkit-text-stroke:0.25px currentColor;color:#e9c38c">超清</div>
<div class="t" style="left:484px;top:556.5px;font-size:14.5px;-webkit-text-stroke:0.25px currentColor;color:#fff">字幕</div>
<div class="t" style="left:535.5px;top:556.5px;font-size:14.5px;-webkit-text-stroke:0.25px currentColor;color:#fff">查找</div>
<div class="a" style="left:448px;top:544px;width:31px;height:14px;border-radius:7px;background:#3f2f27;border:0.8px solid #6e5646"></div>
<div class="t" style="left:453.3px;top:546.5px;font-size:10.4px;font-weight:bold;color:#dcc4ac;transform:scaleX(0.9);transform-origin:0 0;letter-spacing:-0.2px">SVIP</div>
<div class="a" style="left:549.5px;top:544px;width:31px;height:14px;border-radius:7px;background:#3f2f27;border:0.8px solid #6e5646"></div>
<div class="t" style="left:554.8px;top:546.5px;font-size:10.4px;font-weight:bold;color:#dcc4ac;transform:scaleX(0.9);transform-origin:0 0;letter-spacing:-0.2px">SVIP</div>

</body></html>
